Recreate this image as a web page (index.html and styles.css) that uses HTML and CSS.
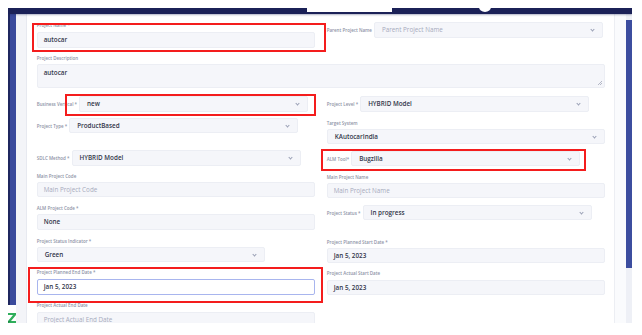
FILE: index.html
```html
<!DOCTYPE html>
<html lang="en">
<head>
  <meta charset="UTF-8">
  <meta name="viewport" content="width=device-width, initial-scale=1.0">
  <title>Edit Project</title>
  <link rel="stylesheet" href="styles.css">
</head>
<body>
<div class="page">

  <div class="screen">
    <div class="topbar"></div>
    <div class="main">

      <aside class="sidebar">
        <div class="rail"></div>
        <div class="brand">
          <svg width="8" height="10" viewBox="0 0 8 10">
            <polygon points="0,0 8,0 8,2 3,8 8,8 8,10 0,10 0,8 5,2 0,2" fill="#2fae5b"/>
            <polygon points="0,8 3,8 0,10" fill="#1d8a47"/>
          </svg>
        </div>
      </aside>

      <div class="gutter"></div>

      <section class="card">
        <div class="row-top">
          <div class="field">
            <label>Project Name *</label>
            <div class="input value">autocar</div>
          </div>
          <div class="field inline">
            <label>Parent Project Name</label>
            <div class="select placeholder">Parent Project Name<span class="chev"></span></div>
          </div>
        </div>

        <div class="field desc">
          <label>Project Description</label>
          <div class="textarea value">autocar<span class="grip"></span></div>
        </div>

        <div class="cols">
          <div class="col">
            <div class="field inline bv">
              <label>Business Vertical *</label>
              <div class="select value">new<span class="chev"></span></div>
            </div>
            <div class="field inline pt">
              <label>Project Type *</label>
              <div class="select value">ProductBased<span class="chev"></span></div>
            </div>
            <div class="field inline sdlc">
              <label>SDLC Method *</label>
              <div class="select value">HYBRID Model<span class="chev"></span></div>
            </div>
            <div class="field mpc">
              <label>Main Project Code</label>
              <div class="input placeholder">Main Project Code</div>
            </div>
            <div class="field apc">
              <label>ALM Project Code *</label>
              <div class="input value">None</div>
            </div>
            <div class="field psi">
              <label>Project Status Indicator *</label>
              <div class="select short value">Green<span class="chev"></span></div>
            </div>
            <div class="field ped">
              <label>Project Planned End Date *</label>
              <div class="input value focus">Jan 5, 2023</div>
            </div>
            <div class="field aed">
              <label>Project Actual End Date</label>
              <div class="input placeholder">Project Actual End Date</div>
            </div>
          </div>

          <div class="col">
            <div class="field inline pl">
              <label>Project Level *</label>
              <div class="select value">HYBRID Model<span class="chev"></span></div>
            </div>
            <div class="field ts">
              <label>Target System</label>
              <div class="select value">KAutocarIndia<span class="chev"></span></div>
            </div>
            <div class="field inline alm">
              <label>ALM Tool*</label>
              <div class="select value">Bugzilla<span class="chev"></span></div>
            </div>
            <div class="field mpn">
              <label>Main Project Name</label>
              <div class="input placeholder">Main Project Name</div>
            </div>
            <div class="field inline ps">
              <label>Project Status *</label>
              <div class="select value">In progress<span class="chev"></span></div>
            </div>
            <div class="field psd">
              <label>Project Planned Start Date *</label>
              <div class="input value">Jan 5, 2023</div>
            </div>
            <div class="field asd">
              <label>Project Actual Start Date</label>
              <div class="input value">Jan 5, 2023</div>
            </div>
          </div>
        </div>
      </section>

      <div class="rgap"></div>
      <div class="scrollbar"><div class="thumb"></div></div>
    </div>
  </div>

  <!-- bits sitting over the header bar -->
  <div class="tab"></div>
  <div class="knob"></div>

  <!-- red annotation boxes -->
  <div class="mark mark-name"></div>
  <div class="mark mark-bv"></div>
  <div class="mark mark-alm"></div>
  <div class="mark mark-end"></div>

</div>
</body>
</html>
```

FILE: styles.css
```css
body {
  margin: 0;
  background: #fff;
  font-family: "Open Sans", "Noto Sans", sans-serif;
}

.page {
  position: relative;
  width: 642px;
  height: 335px;
  overflow: hidden;
}

.screen {
  margin: 8px 0 0 8px;
  width: 624px;
  height: 315px;
  display: flex;
  flex-direction: column;
  overflow: hidden;
}

.topbar {
  height: 6px;
  background: #1b2157;
  box-shadow: 0 1px 2px rgba(27, 33, 87, 0.35);
  position: relative;
  z-index: 1;
}

.main {
  flex: 1;
  display: flex;
  min-height: 0;
}

.sidebar {
  width: 8px;
  display: flex;
  flex-direction: column;
}

.rail {
  height: 291px;
  background: #3a4a9c;
  border-left: 2px solid #1f275f;
}

.brand {
  flex: 1;
  background: #fff;
  display: flex;
  align-items: flex-end;
  padding-bottom: 0;
}

.gutter {
  width: 10px;
  background: #f3f4f8;
}

.card {
  width: 586px;
  background: #fff;
  border-left: 1px solid #e7e9f0;
  border-right: 1px solid #eceef3;
  padding: 8px 8px 0 10px;
  overflow: hidden;
}

.rgap {
  width: 12px;
  background: #fafbfd;
}

.scrollbar {
  width: 6px;
  background: #eef0f6;
  padding-top: 6px;
}

.thumb {
  height: 248px;
  background: #3c4d9f;
}

/* form */

.row-top {
  display: grid;
  grid-template-columns: 278px 278px;
  column-gap: 12px;
  align-items: start;
}

.cols {
  display: grid;
  grid-template-columns: 278px 278px;
  column-gap: 12px;
  margin-top: 8px;
}

.col {
  display: flex;
  flex-direction: column;
}

.field label {
  display: block;
  font-size: 4.5px;
  line-height: 6px;
  font-weight: 600;
  color: #8d92a6;
  margin-bottom: 4px;
  white-space: nowrap;
}

.field.inline {
  display: flex;
  align-items: center;
}

.field.inline label {
  margin: 0 2px 0 0;
}

.input, .select, .textarea {
  box-sizing: border-box;
  height: 16px;
  background: #f5f6fa;
  border: 1px solid #eceef4;
  border-radius: 2px;
  font-size: 6.3px;
  line-height: 14px;
  padding: 0 6px;
  white-space: nowrap;
  position: relative;
}

.select {
  width: 229px;
  padding-left: 7px;
}

.select.short {
  width: 228px;
}

.ts .select {
  width: 278px;
  height: 15px;
  line-height: 13px;
}

.value {
  color: #33374a;
  font-weight: 600;
}

.placeholder {
  color: #a7abbd;
  font-weight: 400;
}

.focus {
  background: #fff;
  border-color: #a8b5ee;
}

.chev {
  position: absolute;
  right: 8px;
  top: 5px;
  width: 2px;
  height: 2px;
  border-right: 0.7px solid #9aa0b5;
  border-bottom: 0.7px solid #9aa0b5;
  transform: rotate(45deg);
}

.desc {
  margin-top: 7px;
}

.textarea {
  width: 568px;
  height: 24px;
  line-height: 15px;
}

.grip {
  position: absolute;
  right: 2px;
  bottom: 2px;
  width: 4px;
  height: 4px;
  background: linear-gradient(135deg, transparent 45%, #b4b8c6 45%, #b4b8c6 55%, transparent 55%, transparent 70%, #b4b8c6 70%, #b4b8c6 80%, transparent 80%);
}

.mpc .input, .mpn .input, .asd .input, .psd .input {
  height: 15px;
  line-height: 13px;
}

/* vertical rhythm, left column */
.pt { margin-top: 6px; }
.pt .select { height: 15px; line-height: 13px; }
.sdlc { margin-top: 17px; }
.mpc { margin-top: 7px; }
.mpc label, .mpn label, .desc label { margin-bottom: 3px; }
.apc { margin-top: 8px; }
.apc label { margin-bottom: 3px; }
.psi { margin-top: 8px; }
.psi label, .psd label { margin-bottom: 3px; }
.psi .select { height: 15px; line-height: 13px; }
.ped { margin-top: 7px; }
.aed { margin-top: 7px; }

/* right column */
.ts { margin-top: 8px; }
.ts label { margin-bottom: 3px; }
.alm { margin-top: 7px; }
.alm .select { height: 15px; line-height: 13px; }
.mpn { margin-top: 8px; }
.ps { margin-top: 7px; }
.ps .select { height: 15px; line-height: 13px; }
.psd { margin-top: 19px; }
.asd { margin-top: 7px; }

/* overlays */

.tab {
  position: absolute;
  left: 307px;
  top: 0;
  width: 85px;
  height: 12px;
  background: #fff;
  z-index: 2;
}

.knob {
  position: absolute;
  left: 479px;
  top: 2px;
  width: 12px;
  height: 10px;
  border-radius: 50%;
  background: #fff;
  z-index: 2;
}

.mark {
  position: absolute;
  border: 2px solid #f41d1d;
  box-sizing: border-box;
  z-index: 3;
}

.mark-name { left: 32px; top: 23px; width: 294px; height: 29px; }
.mark-bv   { left: 65px; top: 94px; width: 251px; height: 22px; }
.mark-alm  { left: 321px; top: 149px; width: 265px; height: 22px; }
.mark-end  { left: 28px; top: 267px; width: 295px; height: 36px; }
```
